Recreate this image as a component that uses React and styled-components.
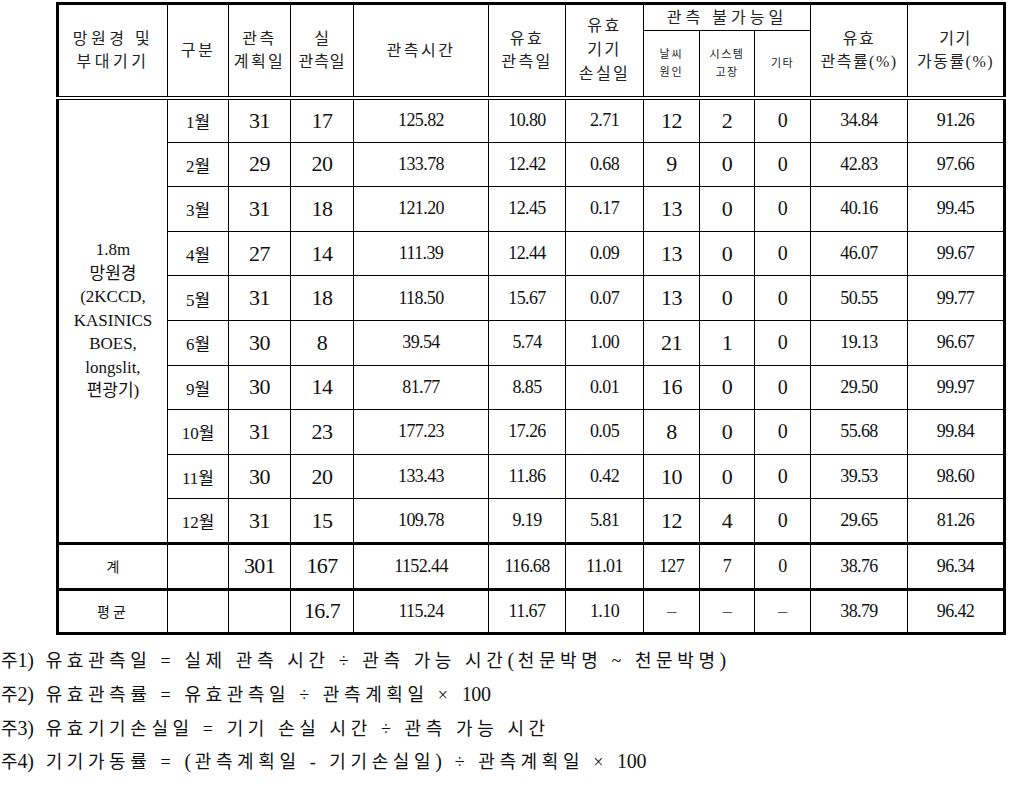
import React from 'react';
import styled, { createGlobalStyle } from 'styled-components';

const Global = createGlobalStyle`
  html, body { margin: 0; padding: 0; background: #fff; }
  body {
    font-family: "Liberation Serif", "Noto Sans CJK KR", serif;
    color: #111;
  }
`;

const Page = styled.div`
  padding-top: 2px;
`;

const Table = styled.table`
  margin-left: 56px;
  width: 947px;
  border-collapse: collapse;
  table-layout: fixed;
  border: 3px solid #000;
`;

const HeadRow = styled.tr`
  height: ${(p) => p.$h}px;
`;

const HeadCell = styled.th`
  border: 1px solid #000;
  border-bottom: ${(p) => (p.$last ? '4px double #000' : '1px solid #000')};
  padding: 0;
  font-weight: 400;
  font-size: ${(p) => p.$size || 16}px;
  letter-spacing: ${(p) => p.$ls ?? 2.5}px;
  line-height: ${(p) => p.$lh || 23}px;
  text-align: center;
  vertical-align: middle;
  color: #222;
`;

const Row = styled.tr`
  height: ${(p) => p.$h}px;
  border-top: ${(p) => (p.$thick ? '3px solid #000' : '1px solid #000')};
`;

const Cell = styled.td`
  border: 1px solid #000;
  padding: 0;
  font-size: ${(p) => p.$size || 18}px;
  letter-spacing: ${(p) => p.$ls ?? -0.6}px;
  text-align: center;
  vertical-align: middle;
  white-space: nowrap;
  color: ${(p) => (p.$muted ? '#555' : '#111')};
`;

const SideCell = styled.td`
  border: 1px solid #000;
  padding: 0;
  font-size: 17px;
  line-height: 23.5px;
  text-align: center;
  vertical-align: middle;
  color: #111;
`;

const Notes = styled.div`
  margin-top: 9px;
  padding-left: 1px;
  font-size: 18px;
  letter-spacing: 4.6px;
  line-height: 32.8px;
  color: #111;
`;

const Note = styled.div`
  white-space: nowrap;
`;

const Mark = styled.span`
  letter-spacing: 0;
`;

const Num = styled.span`
  font-size: 20px;
  letter-spacing: -0.3px;
  margin-right: ${(p) => p.$gap ?? 4}px;
`;

const widths = [110, 61, 62, 63, 135, 77, 78, 56, 55, 56, 97, 97];

const rows = [
  ['1월', 31, 17, '125.82', '10.80', '2.71', 12, 2, 0, '34.84', '91.26'],
  ['2월', 29, 20, '133.78', '12.42', '0.68', 9, 0, 0, '42.83', '97.66'],
  ['3월', 31, 18, '121.20', '12.45', '0.17', 13, 0, 0, '40.16', '99.45'],
  ['4월', 27, 14, '111.39', '12.44', '0.09', 13, 0, 0, '46.07', '99.67'],
  ['5월', 31, 18, '118.50', '15.67', '0.07', 13, 0, 0, '50.55', '99.77'],
  ['6월', 30, 8, '39.54', '5.74', '1.00', 21, 1, 0, '19.13', '96.67'],
  ['9월', 30, 14, '81.77', '8.85', '0.01', 16, 0, 0, '29.50', '99.97'],
  ['10월', 31, 23, '177.23', '17.26', '0.05', 8, 0, 0, '55.68', '99.84'],
  ['11월', 30, 20, '133.43', '11.86', '0.42', 10, 0, 0, '39.53', '98.60'],
  ['12월', 31, 15, '109.78', '9.19', '5.81', 12, 4, 0, '29.65', '81.26'],
];

const sideLines = ['1.8m', '망원경', '(2KCCD,', 'KASINICS', 'BOES,', 'longslit,', '편광기)'];

function Lines({ items }) {
  return items.map((t, i) => (
    <React.Fragment key={i}>
      {i > 0 && <br />}
      {t}
    </React.Fragment>
  ));
}

function Label({ n }) {
  return (
    <>
      <Mark>주</Mark>
      <Num $gap={12}>{n})</Num>
    </>
  );
}

export default function App() {
  return (
    <Page>
      <Global />
      <Table>
        <colgroup>
          {widths.map((w, i) => (
            <col key={i} style={{ width: w }} />
          ))}
        </colgroup>
        <thead>
          <HeadRow $h={27}>
            <HeadCell rowSpan={2} $last $ls={3.5}><Lines items={['망원경 및', '부대기기']} /></HeadCell>
            <HeadCell rowSpan={2} $last>구분</HeadCell>
            <HeadCell rowSpan={2} $last><Lines items={['관측', '계획일']} /></HeadCell>
            <HeadCell rowSpan={2} $last $ls={1}><Lines items={['실', '관측일']} /></HeadCell>
            <HeadCell rowSpan={2} $last>관측시간</HeadCell>
            <HeadCell rowSpan={2} $last><Lines items={['유효', '관측일']} /></HeadCell>
            <HeadCell rowSpan={2} $last $lh={24}><Lines items={['유효', '기기', '손실일']} /></HeadCell>
            <HeadCell colSpan={3} $size={16} $ls={4}>관측 불가능일</HeadCell>
            <HeadCell rowSpan={2} $last $ls={1.5}><Lines items={['유효', '관측률(%)']} /></HeadCell>
            <HeadCell rowSpan={2} $last $ls={1.5}><Lines items={['기기', '가동률(%)']} /></HeadCell>
          </HeadRow>
          <HeadRow $h={67}>
            <HeadCell $last $size={11} $ls={2} $lh={18}><Lines items={['날씨', '원인']} /></HeadCell>
            <HeadCell $last $size={11} $ls={1.5} $lh={18}><Lines items={['시스템', '고장']} /></HeadCell>
            <HeadCell $last $size={11} $ls={1.5}>기타</HeadCell>
          </HeadRow>
        </thead>
        <tbody>
          {rows.map((r, i) => (
            <Row key={r[0]} $h={44.6}>
              {i === 0 && (
                <SideCell rowSpan={rows.length}>
                  <Lines items={sideLines} />
                </SideCell>
              )}
              <Cell $size={17} $ls={0}>{r[0]}</Cell>
              <Cell $size={22}>{r[1]}</Cell>
              <Cell $size={22}>{r[2]}</Cell>
              <Cell>{r[3]}</Cell>
              <Cell>{r[4]}</Cell>
              <Cell>{r[5]}</Cell>
              <Cell $size={22}>{r[6]}</Cell>
              <Cell $size={22}>{r[7]}</Cell>
              <Cell $size={20}>{r[8]}</Cell>
              <Cell>{r[9]}</Cell>
              <Cell>{r[10]}</Cell>
            </Row>
          ))}
          <Row $h={46} $thick>
            <Cell $size={14} $ls={0}>계</Cell>
            <Cell />
            <Cell $size={22}>301</Cell>
            <Cell $size={22}>167</Cell>
            <Cell>1152.44</Cell>
            <Cell>116.68</Cell>
            <Cell>11.01</Cell>
            <Cell>127</Cell>
            <Cell>7</Cell>
            <Cell>0</Cell>
            <Cell>38.76</Cell>
            <Cell>96.34</Cell>
          </Row>
          <Row $h={44} $thick>
            <Cell $size={14} $ls={3}>평균</Cell>
            <Cell />
            <Cell />
            <Cell $size={22}>16.7</Cell>
            <Cell>115.24</Cell>
            <Cell>11.67</Cell>
            <Cell>1.10</Cell>
            <Cell $muted>–</Cell>
            <Cell $muted>–</Cell>
            <Cell $muted>–</Cell>
            <Cell>38.79</Cell>
            <Cell>96.42</Cell>
          </Row>
        </tbody>
      </Table>
      <Notes>
        <Note><Label n={1} />유효관측일 = 실제 관측 시간 ÷ 관측 가능 시간<Num>(</Num>천문박명 ~ 천문박명<Num>)</Num></Note>
        <Note><Label n={2} />유효관측률 = 유효관측일 ÷ 관측계획일 × <Num>100</Num></Note>
        <Note><Label n={3} />유효기기손실일 = 기기 손실 시간 ÷ 관측 가능 시간</Note>
        <Note><Label n={4} />기기가동률 = <Num>(</Num>관측계획일 - 기기손실일<Num>)</Num> ÷ 관측계획일 × <Num>100</Num></Note>
      </Notes>
    </Page>
  );
}
